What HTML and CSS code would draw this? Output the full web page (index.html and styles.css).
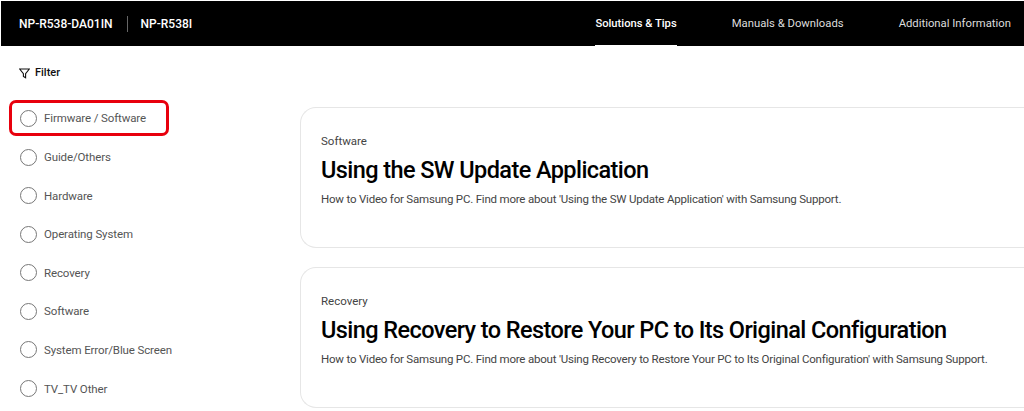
FILE: index.html
```html
<!DOCTYPE html>
<html lang="en">

<head>
    <meta charset="UTF-8" />
    <meta name="viewport" content="width=device-width, initial-scale=1.0" />
    <title>NP-R538I Support</title>
    <link rel="stylesheet" href="styles.css">
</head>

<body>
    <header class="topbar">
        <div class="model">
            <span>NP-R538-DA01IN</span>
            <span class="model-sep"></span>
            <span>NP-R538I</span>
        </div>
        <nav class="tabs">
            <a class="tab active">Solutions &amp; Tips</a>
            <a class="tab">Manuals &amp; Downloads</a>
            <a class="tab">Additional Information</a>
        </nav>
    </header>

    <main class="content">
        <aside class="sidebar">
            <div class="filter">
                <svg class="filter-icon" width="11" height="11" viewBox="0 0 11 11">
                    <path d="M0.7 1h9.6L6.6 5.6v4.2L4.4 8.4V5.6z" fill="none" stroke="#111" stroke-width="1.1" />
                </svg>
                Filter
            </div>
            <ul class="options">
                <li class="option highlighted"><span class="radio"></span>Firmware / Software</li>
                <li class="option"><span class="radio"></span>Guide/Others</li>
                <li class="option"><span class="radio"></span>Hardware</li>
                <li class="option"><span class="radio"></span>Operating System</li>
                <li class="option"><span class="radio"></span>Recovery</li>
                <li class="option"><span class="radio"></span>Software</li>
                <li class="option"><span class="radio"></span>System Error/Blue Screen</li>
                <li class="option"><span class="radio"></span>TV_TV Other</li>
            </ul>
        </aside>

        <section class="cards">
            <article class="card">
                <div class="card-cat">Software</div>
                <h2 class="card-title">Using the SW Update Application</h2>
                <p class="card-desc">How to Video for Samsung PC. Find more about 'Using the SW Update Application' with Samsung Support.</p>
            </article>
            <article class="card">
                <div class="card-cat">Recovery</div>
                <h2 class="card-title">Using Recovery to Restore Your PC to Its Original Configuration</h2>
                <p class="card-desc">How to Video for Samsung PC. Find more about 'Using Recovery to Restore Your PC to Its Original Configuration' with Samsung Support.</p>
            </article>
        </section>
    </main>
</body>

</html>
```

FILE: styles.css
```css
html,
body {
    height: 411px;
    overflow: hidden;
}

body {
    font-family: Roboto, Arial, sans-serif;
    background-color: #fff;
    color: #111;
    margin: 0;
}

.topbar {
    display: flex;
    justify-content: space-between;
    align-items: center;
    height: 45px;
    margin: 1px 0 0 1px;
    padding: 0 13px 0 18px;
    background-color: #000;
    color: #fff;
}

.model {
    display: flex;
    align-items: center;
    font-size: 12px;
    font-weight: 500;
}

.model-sep {
    width: 1px;
    height: 16px;
    margin: 0 13px 0 14px;
    background-color: #666;
}

.tabs {
    display: flex;
    gap: 55px;
    height: 100%;
}

.tab {
    display: flex;
    align-items: center;
    font-size: 11.3px;
    color: #ddd;
    border-bottom: 1px solid transparent;
}

.tab.active {
    color: #fff;
    font-size: 11.2px;
    font-weight: 500;
    border-bottom-color: #fff;
}

.content {
    display: flex;
}

.sidebar {
    width: 300px;
    flex-shrink: 0;
}

.filter {
    display: flex;
    align-items: center;
    gap: 5px;
    margin: 20px 0 0 19px;
    font-size: 11px;
    font-weight: 500;
    line-height: 14px;
}

.options {
    list-style: none;
    margin: 20px 0 0 9px;
    padding: 0;
}

.option {
    display: flex;
    align-items: center;
    width: 160px;
    height: 34px;
    margin-bottom: 4.6px;
    padding-left: 11px;
    box-sizing: border-box;
    font-size: 11.5px;
    letter-spacing: -0.12px;
    white-space: nowrap;
    color: #555;
}

.option.highlighted {
    height: 36px;
    margin-bottom: 4px;
    border: 3px solid #e8000d;
    border-radius: 7px;
    padding-left: 8px;
}

.radio {
    width: 15px;
    height: 15px;
    margin-right: 7px;
    border: 1px solid #777;
    border-radius: 50%;
    flex-shrink: 0;
}

.cards {
    flex: 1;
    display: flex;
    flex-direction: column;
    gap: 19px;
    margin-top: 61px;
}

.card {
    height: 141px;
    box-sizing: border-box;
    padding: 26px 0 0 20px;
    border: 1px solid #e6e6e6;
    border-right: none;
    border-radius: 16px 0 0 16px;
}

.card-cat {
    font-size: 11.5px;
    line-height: 15px;
    color: #444;
}

.card-title {
    margin: 7px 0 8px;
    font-size: 23.5px;
    font-weight: 500;
    letter-spacing: -0.58px;
    line-height: 28px;
    color: #000;
}

.card-desc {
    margin: 0;
    font-size: 11.5px;
    letter-spacing: -0.2px;
    line-height: 15px;
    color: #444;
}
```
